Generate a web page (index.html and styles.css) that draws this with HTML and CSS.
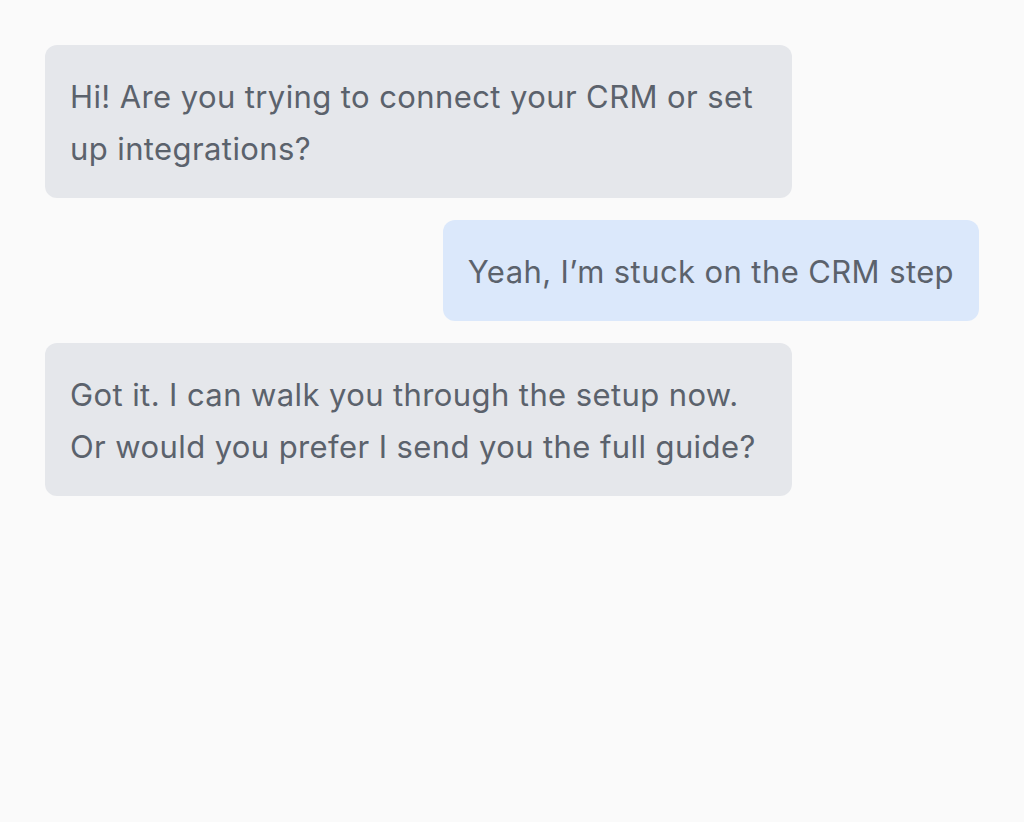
FILE: index.html
```html
<!DOCTYPE html>
<html>
<head>
<meta charset="utf-8">
<link rel="stylesheet" href="styles.css">
</head>
<body>
<div class="chat">
  <div class="msg bot">Hi! Are you trying to connect your CRM or set up integrations?</div>
  <div class="msg user">Yeah, I’m stuck on the CRM step</div>
  <div class="msg bot">Got it. I can walk you through the setup now. Or would you prefer I send you the full guide?</div>
</div>
</body>
</html>
```
FILE: styles.css
```css
html, body {
  margin: 0;
  padding: 0;
  background: #fafafa;
}
.chat {
  padding: 45px;
  display: flex;
  flex-direction: column;
  gap: 22px;
  font-family: Inter, "Liberation Sans", Arial, sans-serif;
  font-size: 31px;
  letter-spacing: 0.4px;
  line-height: 52px;
  color: #5b626c;
}
.msg {
  max-width: 80%;
  box-sizing: border-box;
  padding: 26px 25px 23px;
  border-radius: 12px;
}
.bot {
  align-self: flex-start;
  width: 80%;
  background: #e5e7eb;
}
.user {
  align-self: flex-end;
  background: #dbe8fb;
}
```
